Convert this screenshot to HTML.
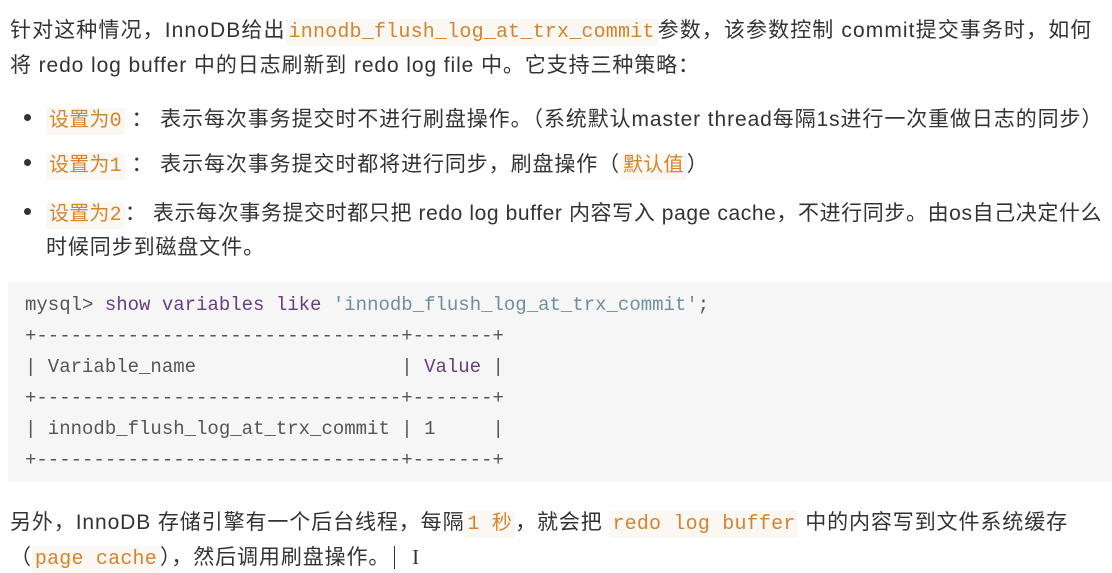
<!DOCTYPE html>
<html><head><meta charset="utf-8"><style>
body{margin:0;background:#fff;width:1112px;height:572px;overflow:hidden;font-family:"Liberation Sans","Noto Sans CJK SC",sans-serif;color:#333;font-size:21px}
.p{position:absolute;left:10px;white-space:nowrap;letter-spacing:0.9px}
code{font-family:"Liberation Mono",monospace;color:#d4842f;background:#fbf7f2;padding:2px 3px;border-radius:3px;font-size:20px;letter-spacing:0.2px}
.b{position:absolute;left:24px;width:7px;height:7px;border-radius:50%;background:#333}
.pre{position:absolute;left:8px;top:282px;width:1104px;height:200px;background:#f6f6f6}
.c{position:absolute;left:25px;font-family:"Liberation Mono",monospace;font-size:19px;color:#555;white-space:pre}
.k{color:#6b3c7f}.s{color:#6f8fa0}
.z{font-family:'Liberation Mono','Noto Sans CJK SC',monospace}
</style></head><body>
<div class="p" style="top:14px;letter-spacing:1.1px">针对这种情况，InnoDB给出<code>innodb_flush_log_at_trx_commit</code>参数，该参数控制 commit提交事务时，如何</div>
<div class="p" style="top:49px">将 redo log buffer 中的日志刷新到 redo log file 中。它支持三种策略：</div>
<div class="b" style="top:114px"></div>
<div class="p" style="left:46px;top:103px"><code class="z">设置为0</code> ： 表示每次事务提交时不进行刷盘操作。（系统默认master thread每隔1s进行一次重做日志的同步）</div>
<div class="b" style="top:159px"></div>
<div class="p" style="left:46px;top:148px"><code class="z">设置为1</code> ： 表示每次事务提交时都将进行同步，刷盘操作（<code class="z">默认值</code>）</div>
<div class="b" style="top:208px"></div>
<div class="p" style="left:46px;top:197px;letter-spacing:0.6px"><code class="z">设置为2</code>： 表示每次事务提交时都只把 redo log buffer 内容写入 page cache，不进行同步。由os自己决定什么</div>
<div class="p" style="left:46px;top:231px">时候同步到磁盘文件。</div>
<div class="pre"></div>
<div class="c" style="top:294px">mysql&gt; <span class="k">show variables like</span> <span class="s">'innodb_flush_log_at_trx_commit'</span>;</div>
<div class="c" style="top:325px">+--------------------------------+-------+</div>
<div class="c" style="top:356px">| Variable_name                  | <span class="k">Value</span> |</div>
<div class="c" style="top:387px">+--------------------------------+-------+</div>
<div class="c" style="top:418px">| innodb_flush_log_at_trx_commit | 1     |</div>
<div class="c" style="top:449px">+--------------------------------+-------+</div>
<div class="p" style="top:506px">另外，InnoDB 存储引擎有一个后台线程，每隔<code class="z">1 秒</code>，就会把 <code>redo log buffer</code> 中的内容写到文件系统缓存</div>
<div class="p" style="top:541px">（<code>page cache</code>），然后调用刷盘操作。<span style="border-left:1px solid #333;margin-left:4px"></span> <span style="font-family:'Liberation Serif',serif;margin-left:10px">I</span></div>
</body></html>
